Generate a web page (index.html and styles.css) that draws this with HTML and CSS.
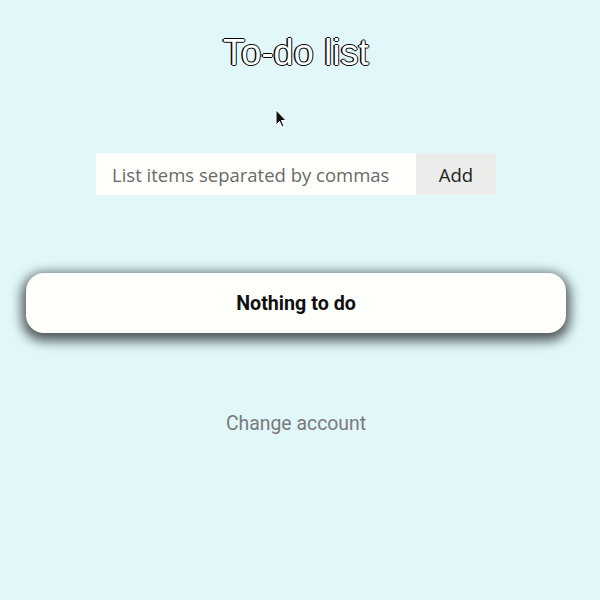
FILE: index.html
```html
<!DOCTYPE html>
<html>
<head>
<meta charset="utf-8">
<link rel="stylesheet" href="styles.css">
</head>
<body>
<main class="app">
  <h1 class="title">To-do list</h1>
  <form class="add-form">
    <input class="add-input" type="text" placeholder="List items separated by commas">
    <button class="add-btn" type="button">Add</button>
  </form>
  <div class="card">Nothing to do</div>
  <a class="change" href="#">Change account</a>
</main>
<svg class="cursor" width="12" height="20" viewBox="0 0 12 20"><path d="M1 1 L1 16 L4.5 12.5 L7 18 L9 17 L6.5 11.5 L11 11.5 Z" fill="#111" stroke="#fff" stroke-width="1"/></svg>
</body>
</html>
```
FILE: styles.css
```css
html, body {
  margin: 0;
  padding: 0;
  background: #e1f7fa;
  height: 100%;
}
.app {
  width: 592px;
  display: flex;
  flex-direction: column;
  align-items: center;
  padding-top: 32px;
}
.title {
  margin: 0;
  font-family: "Liberation Sans", Arial, sans-serif;
  font-weight: normal;
  font-size: 36px;
  line-height: 42px;
  letter-spacing: 0.2px;
  color: #fff;
  text-shadow: -1.5px 0 #000, 1px 0 #000, 0 -1px #000, 0 1px #000;
}
.add-form {
  margin-top: 79px;
  display: flex;
}
.add-input {
  box-sizing: border-box;
  width: 320px;
  height: 42px;
  border: none;
  outline: none;
  background: #fffffc;
  padding: 0 16px;
  font-family: "Open Sans", sans-serif;
  font-size: 18.5px;
  color: #333;
}
.add-input::placeholder { color: #6a6a6a; }
.add-btn {
  width: 80px;
  height: 42px;
  border: none;
  background: #ececea;
  font-family: "Open Sans", sans-serif;
  font-size: 18.5px;
  color: #222;
  padding: 0;
}
.card {
  margin-top: 78px;
  box-sizing: border-box;
  width: 540px;
  height: 60px;
  border-radius: 18px;
  background: #fffffc;
  box-shadow: 0 4px 12px 4px rgba(0, 0, 0, 0.65);
  display: flex;
  align-items: center;
  justify-content: center;
  font-family: Roboto, sans-serif;
  font-weight: bold;
  font-size: 19.7px;
  color: #111;
}
.change {
  margin-top: 79px;
  font-family: Roboto, sans-serif;
  font-size: 19.4px;
  color: #7a7a7a;
  text-decoration: none;
}
.cursor {
  position: absolute;
  left: 275px;
  top: 109px;
}
```
